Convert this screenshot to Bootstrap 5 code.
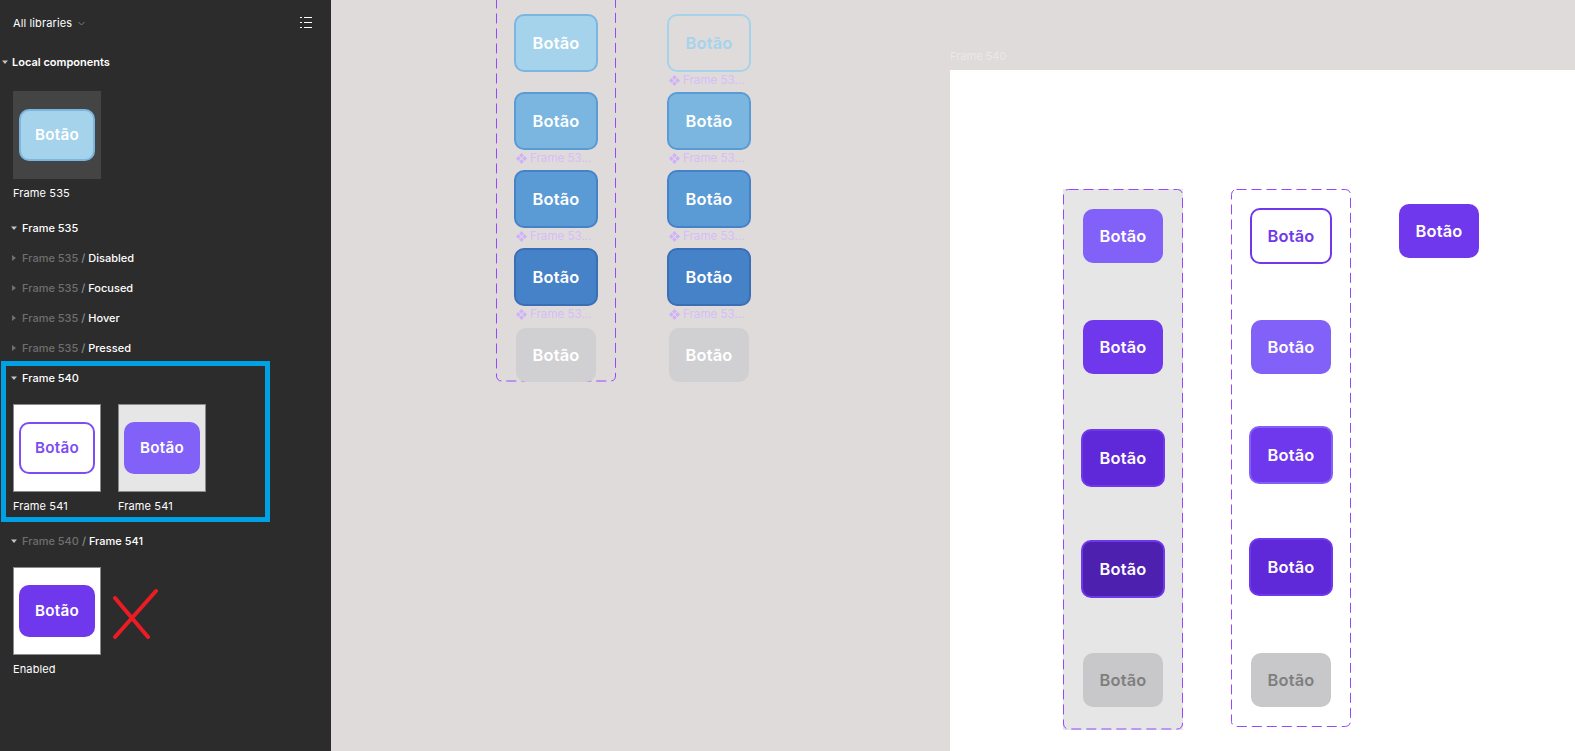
<!DOCTYPE html>
<html lang="pt"><head><meta charset="utf-8"><title>Frame 540</title>
<link href="https://cdn.jsdelivr.net/npm/bootstrap@5.3.0/dist/css/bootstrap.min.css" rel="stylesheet">
<style>
html,body{height:751px;overflow:hidden;background:#dfdbda;font-family:Inter,"Liberation Sans",sans-serif}
.shell{height:751px;width:1575px}
.side{width:331px;background:#2c2c2c;color:#fff;font-size:11px;line-height:14px;font-weight:400;letter-spacing:.12px;flex:none;overflow:hidden}
.top-bar{height:46px;padding:0 19px 0 13px}
.chev{margin-left:6px}
.side-row{height:30px;padding-left:11px;gap:3px}
.side-row .dim{color:#6f6f6f}
.side-row .sl{color:#8a8a8a}
.side-row .strong{font-weight:500;letter-spacing:0}
.tri{width:8px;height:8px;flex:none}
.local-h{height:32px;padding-left:2px;gap:2px;font-weight:600;letter-spacing:0}
.thumbs{padding-left:13px;gap:17px}
.first-thumb{margin-top:13px}
.x-row{gap:11px;margin-top:11px}
.thumb{width:88px;height:88px;flex:none;background:#444;padding-left:6px;padding-right:6px}
.thumb.lt{background:#fff;border:1px solid #8b8b8b;padding:0 5px}
.thumb.gr{background:#e6e6e6;border:1px solid #8b8b8b;padding:0 5px}
.cap{height:14px;margin-top:7px;white-space:nowrap}
.sec-head{margin-top:13px}
.box{border:5px solid #00a0e4;width:269px;height:161px;margin-left:1px;margin-top:-2px}
.box .side-row{padding-left:5px;height:24px;margin-top:0}
.box .thumbs{padding-left:7px;margin-top:14px}
.box .thumbs.caps{margin-top:0}
.box .lab{width:88px}
.after-box{margin-top:4px}
.tb{width:76px;height:52px;border-radius:10px;font-size:15.2px;font-weight:600;letter-spacing:.25px}
.tb-blue{background:#a5d3ec;border:2px solid #7ab6e0;color:#fff}
.tb-out{background:#fff;border:2px solid #7c4df2;color:#7c4df2}
.tb-v{background:#8261f9;color:#fff}
.tb-p{background:#6f38ed;color:#fff}
.canvas{position:relative;flex:1 1 auto;overflow:hidden;background:#dfdbda}
.frame{position:absolute;display:flex;flex-direction:column;align-items:center}
.dash{position:absolute;inset:0;width:100%;height:100%;pointer-events:none;overflow:visible}
.dash rect{x:.5px;y:.5px;width:calc(100% - 1px);height:calc(100% - 1px);rx:5px;fill:none;stroke:#9747ff;stroke-width:1;stroke-dasharray:10 5}
.btnx{position:relative;flex:none;display:flex;align-items:center;justify-content:center;color:#fff;font-weight:600;font-size:16.4px;letter-spacing:.2px;border-radius:10px;width:84px;height:58px;border:2px solid transparent}
.flat{width:80px;height:54px;border:0}
.b1{background:#a5d3ec;border-color:#7ab6e0}
.b1o{border-color:#a5d3ec;color:#a5d3ec}
.b2{background:#7ab6e0;border-color:#5b9bd5}
.b3{background:#5b9bd5;border-color:#4682c8}
.b4{background:#4682c8;border-color:#3a6fb5}
.b0{background:#d0d0d2;margin-top:2px}
.p-a{background:#8261f9}
.p-b{background:#6f38ed}
.p-c{background:#5f28d8;border-color:#6f38ed}
.p-d{background:#4d20b0;border-color:#6f38ed}
.p-e{background:#6f38ed;border-color:#8261f9}
.p-off{background:#c8c8ca;color:#7f7f7f}
.p-out{width:82px;height:56px;background:#fff;border-color:#6f38ed;color:#6f38ed}
.slot{height:20px;width:84px;flex:none;font-size:11.6px;line-height:14px;color:#d6bdfb;padding:0 0 4px 2px;gap:3px;font-weight:400;white-space:nowrap;display:flex;align-items:center}
.f-a{left:165px;top:-26px;width:120px;height:407.5px;padding-top:40px}
.f-b{left:336px;top:-26px;width:84px;height:407.5px;padding-top:40px}
.sheet{position:absolute;left:619px;top:70px;right:0;bottom:0;background:#fff}
.sheet-lab{position:absolute;left:619px;top:49px;font-size:11px;line-height:14px;color:#ebe8e7}
.g-a{left:732px;top:189px;width:120px;height:540.5px;background:#e6e6e6;padding-top:20px}
.g-b{left:900px;top:189px;width:120px;height:538px;padding-top:19px}
.solo{position:absolute;left:1068px;top:204px}
.m52{margin-top:52px}.m53{margin-top:53px}.m54{margin-top:54px}.m55{margin-top:55px}.m56{margin-top:56px}.m57{margin-top:57px}
</style></head><body>
<svg width="0" height="0" class="position-absolute"><defs>
<symbol id="down" viewBox="0 0 8 8"><path d="M0 2.500h6L3 6z" fill="#c4c4c4"/></symbol>
<symbol id="right" viewBox="0 0 8 8"><path d="M1 1v6l4-3z" fill="#6f6f6f"/></symbol>
<symbol id="cmp" viewBox="0 0 12 12"><path d="M6 0 8.600 2.600 6 5.200 3.400 2.600zM2.600 3.400 5.200 6 2.600 8.600 0 6zM9.400 3.400 12 6 9.400 8.600 6.800 6zM6 6.800 8.600 9.400 6 12 3.400 9.400z" fill="#d0b0fb"/></symbol>
</defs></svg>
<div class="shell d-flex">
<aside class="side">
 <div class="top-bar d-flex align-items-center justify-content-between">
  <div class="d-flex align-items-center"><span>All libraries</span>
   <svg class="chev" width="7" height="5" viewBox="0 0 7 5"><path d="M.5 1 3.500 4 6.500 1" fill="none" stroke="#7a7a7a"/></svg></div>
  <svg width="12" height="12" viewBox="0 0 12 12"><g stroke="#fff" fill="none"><path d="M0 .5h2M4 .5h8M0 5.500h2M4 5.500h8M0 10.500h2M4 10.500h8"/></g></svg>
 </div>
 <div class="local-h d-flex align-items-center"><svg class="tri"><use href="#down"/></svg><span>Local components</span></div>
 <div class="thumbs first-thumb d-flex">
  <div class="thumb d-flex align-items-center justify-content-center"><div class="tb tb-blue d-flex align-items-center justify-content-center">Botão</div></div>
 </div>
 <div class="thumbs d-flex"><div class="cap">Frame 535</div></div>
 <div class="side-row sec-head d-flex align-items-center"><svg class="tri"><use href="#down"/></svg><span class="strong">Frame 535</span></div>
 <div class="side-row d-flex align-items-center"><svg class="tri"><use href="#right"/></svg><span class="strong"><span class="dim">Frame 535</span> <span class="sl">/</span> Disabled</span></div>
 <div class="side-row d-flex align-items-center"><svg class="tri"><use href="#right"/></svg><span class="strong"><span class="dim">Frame 535</span> <span class="sl">/</span> Focused</span></div>
 <div class="side-row d-flex align-items-center"><svg class="tri"><use href="#right"/></svg><span class="strong"><span class="dim">Frame 535</span> <span class="sl">/</span> Hover</span></div>
 <div class="side-row d-flex align-items-center"><svg class="tri"><use href="#right"/></svg><span class="strong"><span class="dim">Frame 535</span> <span class="sl">/</span> Pressed</span></div>
 <div class="box">
  <div class="side-row d-flex align-items-center"><svg class="tri"><use href="#down"/></svg><span class="strong">Frame 540</span></div>
  <div class="thumbs d-flex">
   <div class="thumb lt d-flex align-items-center justify-content-center"><div class="tb tb-out d-flex align-items-center justify-content-center">Botão</div></div>
   <div class="thumb gr d-flex align-items-center justify-content-center"><div class="tb tb-v d-flex align-items-center justify-content-center">Botão</div></div>
  </div>
  <div class="thumbs caps d-flex"><div class="cap lab">Frame 541</div><div class="cap lab">Frame 541</div></div>
 </div>
 <div class="side-row after-box d-flex align-items-center"><svg class="tri"><use href="#down"/></svg><span class="strong"><span class="dim">Frame 540</span> <span class="sl">/</span> Frame 541</span></div>
 <div class="thumbs x-row d-flex align-items-center">
  <div class="thumb lt d-flex align-items-center justify-content-center"><div class="tb tb-p d-flex align-items-center justify-content-center">Botão</div></div>
  <svg width="48" height="56" viewBox="0 0 48 56"><path d="M3 15 36 54M44 8 3 54" stroke="#ed1c24" stroke-width="4" stroke-linecap="round" fill="none"/></svg>
 </div>
 <div class="thumbs d-flex"><div class="cap">Enabled</div></div>
</aside>
<main class="canvas">
 <section class="frame f-a">
  <svg class="dash"><rect/></svg>
  <div class="btnx b1">Botão</div><div class="slot"></div>
  <div class="btnx b2">Botão</div><div class="slot"><svg width="11" height="11"><use href="#cmp"/></svg>Frame 53...</div>
  <div class="btnx b3">Botão</div><div class="slot"><svg width="11" height="11"><use href="#cmp"/></svg>Frame 53...</div>
  <div class="btnx b4">Botão</div><div class="slot"><svg width="11" height="11"><use href="#cmp"/></svg>Frame 53...</div>
  <div class="btnx flat b0">Botão</div>
 </section>
 <section class="frame f-b">
  <div class="btnx b1o">Botão</div><div class="slot"><svg width="11" height="11"><use href="#cmp"/></svg>Frame 53...</div>
  <div class="btnx b2">Botão</div><div class="slot"><svg width="11" height="11"><use href="#cmp"/></svg>Frame 53...</div>
  <div class="btnx b3">Botão</div><div class="slot"><svg width="11" height="11"><use href="#cmp"/></svg>Frame 53...</div>
  <div class="btnx b4">Botão</div><div class="slot"><svg width="11" height="11"><use href="#cmp"/></svg>Frame 53...</div>
  <div class="btnx flat b0">Botão</div>
 </section>
 <div class="sheet-lab">Frame 540</div>
 <div class="sheet"></div>
 <section class="frame g-a">
  <svg class="dash"><rect/></svg>
  <div class="btnx flat p-a">Botão</div>
  <div class="btnx flat p-b m57">Botão</div>
  <div class="btnx p-c m55">Botão</div>
  <div class="btnx p-d m53">Botão</div>
  <div class="btnx flat p-off m55">Botão</div>
 </section>
 <section class="frame g-b">
  <svg class="dash"><rect/></svg>
  <div class="btnx p-out">Botão</div>
  <div class="btnx flat p-a m56">Botão</div>
  <div class="btnx p-e m52">Botão</div>
  <div class="btnx p-c m54">Botão</div>
  <div class="btnx flat p-off m57">Botão</div>
 </section>
 <div class="btnx flat p-b solo">Botão</div>
</main>
</div>
<script src="https://cdn.jsdelivr.net/npm/bootstrap@5.3.0/dist/js/bootstrap.bundle.min.js"></script>
</body></html>
